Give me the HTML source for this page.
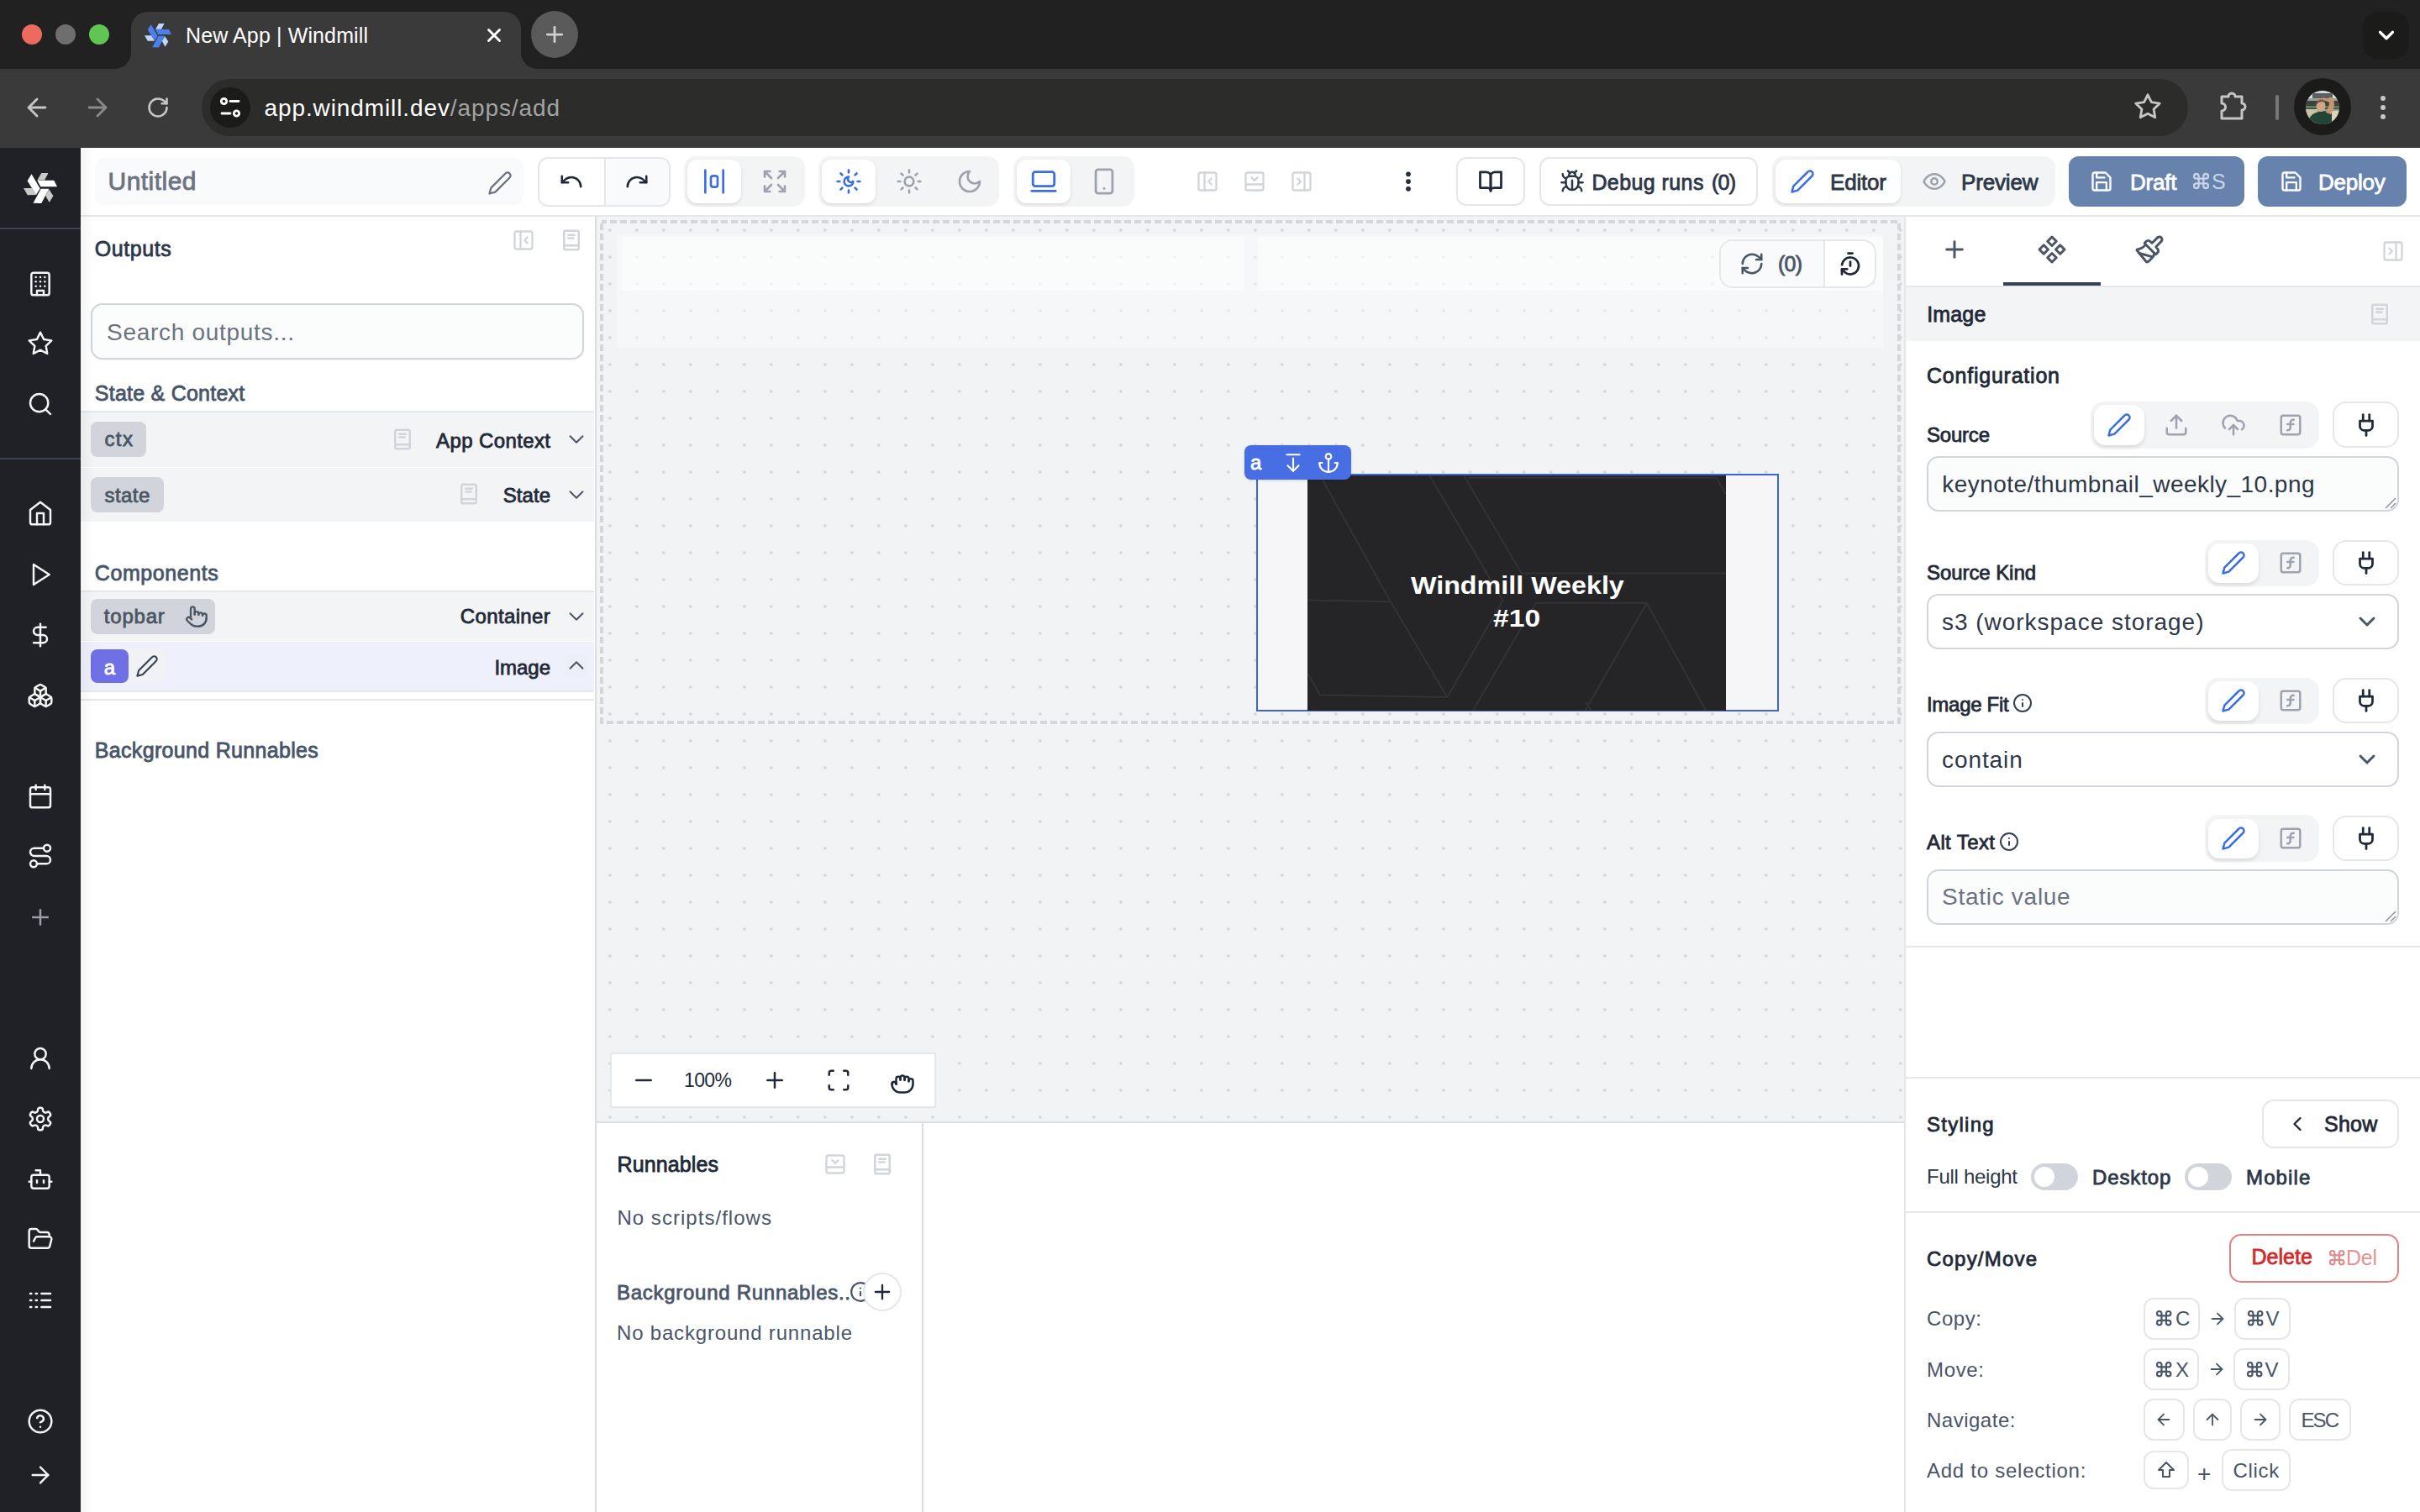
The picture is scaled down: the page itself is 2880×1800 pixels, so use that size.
<!DOCTYPE html><html><head><meta charset="utf-8"><style>
html,body{margin:0;padding:0;width:2880px;height:1800px;overflow:hidden;background:#fff;font-family:"Liberation Sans",sans-serif}
#root{position:relative;width:2880px;height:1800px;overflow:hidden}
.t{position:absolute;line-height:1;white-space:nowrap}
svg{overflow:visible}
</style></head><body><div id="root">
<div style="position:absolute;left:0px;top:0px;width:2880px;height:82px;background:#212121"></div>
<div style="position:absolute;left:0px;top:82px;width:2880px;height:94px;background:#3a3a3a"></div>
<div style="position:absolute;left:156px;top:14px;width:464px;height:68px;background:#3a3a3a;border-radius:20px 20px 0 0"></div>
<div style="position:absolute;left:136px;top:62px;width:20px;height:20px;background:#3a3a3a;overflow:hidden"><div style="position:absolute;left:-20px;top:-20px;width:40px;height:40px;border-radius:50%;background:#212121"></div></div>
<div style="position:absolute;left:620px;top:62px;width:20px;height:20px;background:#3a3a3a;overflow:hidden"><div style="position:absolute;left:0px;top:-20px;width:40px;height:40px;border-radius:50%;background:#212121"></div></div>
<div style="position:absolute;left:26px;top:29px;width:24px;height:24px;background:#ed6a5e;border-radius:50%"></div>
<div style="position:absolute;left:66px;top:29px;width:24px;height:24px;background:#6e6e6e;border-radius:50%"></div>
<div style="position:absolute;left:106px;top:29px;width:24px;height:24px;background:#61c554;border-radius:50%"></div>
<svg style="position:absolute;left:172px;top:27.5px" width="32" height="28.5" viewBox="250 305 1005 905" preserveAspectRatio="none"><polygon points="490,335 745,770 625,960 365,535" fill="#4a7fec"/><polygon points="250,760 502,760 625,960 370,965" fill="#c3d4f6"/><polygon points="785,305 990,305 880,520 660,520" fill="#c3d4f6"/><polygon points="660,525 1160,525 1255,715 760,715" fill="#4a7fec"/><polygon points="770,775 1010,775 785,1210 540,1205" fill="#4a7fec"/><polygon points="1010,790 1140,990 1020,1185 905,975" fill="#c3d4f6"/></svg>
<div id="t1" class="t" style="left:221px;top:30.04px;font-size:25px;font-weight:400;color:#ffffff;letter-spacing:0.124px;font-family:'Liberation Sans',sans-serif;">New App | Windmill</div>
<svg style="position:absolute;left:575.00px;top:29.00px;" width="26" height="26" viewBox="0 0 24 24" fill="none" stroke="#ffffff" stroke-width="2.6" stroke-linecap="round" stroke-linejoin="round"><path d="M18 6 6 18"/><path d="m6 6 12 12"/></svg>
<div style="position:absolute;left:632px;top:13px;width:56px;height:56px;background:#5a5a5a;border-radius:50%"></div>
<svg style="position:absolute;left:645.00px;top:26.00px;" width="30" height="30" viewBox="0 0 24 24" fill="none" stroke="#cfcfcf" stroke-width="2.2" stroke-linecap="round" stroke-linejoin="round"><path d="M5 12h14"/><path d="M12 5v14"/></svg>
<svg style="position:absolute;left:27.00px;top:110.50px;" width="34" height="34" viewBox="0 0 24 24" fill="none" stroke="#c6c6c6" stroke-width="2" stroke-linecap="round" stroke-linejoin="round"><path d="m12 19-7-7 7-7"/><path d="M19 12H5"/></svg>
<svg style="position:absolute;left:99.00px;top:110.50px;" width="34" height="34" viewBox="0 0 24 24" fill="none" stroke="#8a8a8a" stroke-width="2" stroke-linecap="round" stroke-linejoin="round"><path d="M5 12h14"/><path d="m12 5 7 7-7 7"/></svg>
<svg style="position:absolute;left:174.00px;top:114.00px;" width="28" height="28" viewBox="0 0 24 24" fill="none" stroke="#c6c6c6" stroke-width="2.2" stroke-linecap="round" stroke-linejoin="round"><path d="M21 12a9 9 0 1 1-9-9c2.52 0 4.93 1 6.74 2.74L21 8"/><path d="M21 3v5h-5"/></svg>
<div style="position:absolute;left:240px;top:94px;width:2364px;height:68px;background:#2c2c2a;border-radius:34px"></div>
<div style="position:absolute;left:250px;top:104px;width:48px;height:48px;background:#1b1b19;border-radius:50%"></div>
<svg style="position:absolute;left:260px;top:114px" width="28" height="28" viewBox="0 0 28 28" fill="none" stroke="#fff" stroke-width="2.8" stroke-linecap="round"><circle cx="6.5" cy="6.5" r="3.2"/><path d="M14 6.5h10"/><circle cx="21.5" cy="21" r="3.2"/><path d="M4 21h10"/></svg>
<div id="t2" class="t" style="left:314.5px;top:114.80px;font-size:28px;font-weight:400;color:#ffffff;letter-spacing:0.896px;font-family:'Liberation Sans',sans-serif;">app.windmill.dev<span style="color:#a3a3a3">/apps/add</span></div>
<svg style="position:absolute;left:2539.00px;top:110.00px;" width="34" height="34" viewBox="0 0 24 24" fill="none" stroke="#c6c6c6" stroke-width="2" stroke-linecap="round" stroke-linejoin="round"><polygon points="12 2 15.09 8.26 22 9.27 17 14.14 18.18 21.02 12 17.77 5.82 21.02 7 14.14 2 9.27 8.91 8.26 12 2"/></svg>
<svg style="position:absolute;left:2640px;top:108px" width="36" height="36" viewBox="0 0 36 36" fill="none" stroke="#c6c6c6" stroke-width="3" stroke-linejoin="round"><path d="M4 7 H12 A4 4 0 0 1 20 7 H28 V15 A4 4 0 0 1 28 23 V33 H4 V24 A4.5 4.5 0 0 0 4 15 Z"/></svg>
<div style="position:absolute;left:2708px;top:113px;width:4px;height:30px;background:#777;border-radius:2px"></div>
<div style="position:absolute;left:2730px;top:93px;width:68px;height:68px;background:#1b1b19;border-radius:50%"></div>
<svg style="position:absolute;left:2744px;top:107.5px" width="40" height="40" viewBox="0 0 40 40"><defs><clipPath id="av"><circle cx="20" cy="20" r="20"/></clipPath></defs><g clip-path="url(#av)"><rect width="40" height="40" fill="#9aa09c"/><rect y="0" width="40" height="9" fill="#d8dcdc"/><rect x="8" y="3" width="24" height="6" fill="#5a6060"/><rect x="0" y="12" width="40" height="10" fill="#3c4440"/><rect x="0" y="18" width="40" height="3" fill="#5d7d55"/><rect x="0" y="22" width="14" height="18" fill="#c9c3a8"/><rect x="26" y="24" width="14" height="16" fill="#ddd3bd"/><path d="M2 40 Q4 27 16 25 Q26 23 31 27 L31 40 Z" fill="#234535"/><path d="M24 26 Q30 16 27 9 Q31 6 33 10 Q36 20 30 28 Z" fill="#c69574"/><path d="M14 10 Q24 6 30 12 L28 14 Q22 10 16 13 Z" fill="#c69574"/><ellipse cx="18" cy="18" rx="5.5" ry="7" fill="#d3a584"/><path d="M12.5 14 Q17 8 23 12 L22 14 Q17 11 13 16 Z" fill="#6d5542"/></g></svg>
<div style="position:absolute;left:2833px;top:114px;width:6px;height:6px;background:#c6c6c6;border-radius:50%"></div>
<div style="position:absolute;left:2833px;top:125px;width:6px;height:6px;background:#c6c6c6;border-radius:50%"></div>
<div style="position:absolute;left:2833px;top:136px;width:6px;height:6px;background:#c6c6c6;border-radius:50%"></div>
<div style="position:absolute;left:2812px;top:14px;width:55px;height:56px;background:#1b1b19;border-radius:18px"></div>
<svg style="position:absolute;left:2825.00px;top:27.00px;" width="30" height="30" viewBox="0 0 24 24" fill="none" stroke="#ffffff" stroke-width="2.6" stroke-linecap="round" stroke-linejoin="round"><path d="m6 9 6 6 6-6"/></svg>
<div style="position:absolute;left:0px;top:176px;width:96px;height:1624px;background:#1f2126"></div>
<div style="position:absolute;left:0px;top:271px;width:96px;height:2px;background:#3a4150"></div>
<div style="position:absolute;left:0px;top:545px;width:96px;height:2px;background:#3a4150"></div>
<svg style="position:absolute;left:28px;top:206px" width="40" height="36" viewBox="250 305 1005 905" preserveAspectRatio="none"><polygon points="490,335 745,770 625,960 365,535" fill="#ffffff"/><polygon points="250,760 502,760 625,960 370,965" fill="#c9c9c9"/><polygon points="785,305 990,305 880,520 660,520" fill="#c9c9c9"/><polygon points="660,525 1160,525 1255,715 760,715" fill="#ffffff"/><polygon points="770,775 1010,775 785,1210 540,1205" fill="#ffffff"/><polygon points="1010,790 1140,990 1020,1185 905,975" fill="#c9c9c9"/></svg>
<svg style="position:absolute;left:32.00px;top:322.00px;" width="32" height="32" viewBox="0 0 24 24" fill="none" stroke="#f5f5f6" stroke-width="1.85" stroke-linecap="round" stroke-linejoin="round"><rect width="16" height="20" x="4" y="2" rx="2" ry="2"/><path d="M9 22v-4h6v4"/><path d="M8 6h.01"/><path d="M16 6h.01"/><path d="M12 6h.01"/><path d="M12 10h.01"/><path d="M12 14h.01"/><path d="M16 10h.01"/><path d="M16 14h.01"/><path d="M8 10h.01"/><path d="M8 14h.01"/></svg>
<svg style="position:absolute;left:32.00px;top:393.40px;" width="32" height="32" viewBox="0 0 24 24" fill="none" stroke="#f5f5f6" stroke-width="1.85" stroke-linecap="round" stroke-linejoin="round"><polygon points="12 2 15.09 8.26 22 9.27 17 14.14 18.18 21.02 12 17.77 5.82 21.02 7 14.14 2 9.27 8.91 8.26 12 2"/></svg>
<svg style="position:absolute;left:32.00px;top:465.20px;" width="32" height="32" viewBox="0 0 24 24" fill="none" stroke="#f5f5f6" stroke-width="1.85" stroke-linecap="round" stroke-linejoin="round"><circle cx="11" cy="11" r="8"/><path d="m21 21-4.3-4.3"/></svg>
<svg style="position:absolute;left:32.00px;top:595.00px;" width="32" height="32" viewBox="0 0 24 24" fill="none" stroke="#f5f5f6" stroke-width="1.85" stroke-linecap="round" stroke-linejoin="round"><path d="m3 9 9-7 9 7v11a2 2 0 0 1-2 2H5a2 2 0 0 1-2-2z"/><polyline points="9 22 9 12 15 12 15 22"/></svg>
<svg style="position:absolute;left:32.00px;top:667.80px;" width="32" height="32" viewBox="0 0 24 24" fill="none" stroke="#f5f5f6" stroke-width="1.85" stroke-linecap="round" stroke-linejoin="round"><polygon points="6 3 20 12 6 21 6 3"/></svg>
<svg style="position:absolute;left:32.00px;top:740.30px;" width="32" height="32" viewBox="0 0 24 24" fill="none" stroke="#f5f5f6" stroke-width="1.85" stroke-linecap="round" stroke-linejoin="round"><line x1="12" x2="12" y1="2" y2="22"/><path d="M17 5H9.5a3.5 3.5 0 0 0 0 7h5a3.5 3.5 0 0 1 0 7H6"/></svg>
<svg style="position:absolute;left:32.00px;top:812.40px;" width="32" height="32" viewBox="0 0 24 24" fill="none" stroke="#f5f5f6" stroke-width="1.85" stroke-linecap="round" stroke-linejoin="round"><path d="M2.97 12.92A2 2 0 0 0 2 14.63v3.24a2 2 0 0 0 .97 1.71l3 1.8a2 2 0 0 0 2.06 0L12 19v-5.5l-5-3-4.03 2.42Z"/><path d="m7 16.5-4.74-2.85"/><path d="m7 16.5 5-3"/><path d="M7 16.5v5.17"/><path d="M12 13.5V19l3.97 2.38a2 2 0 0 0 2.06 0l3-1.8a2 2 0 0 0 .97-1.71v-3.24a2 2 0 0 0-.97-1.71L17 10.5l-5 3Z"/><path d="m17 16.5-5-3"/><path d="m17 16.5 4.74-2.85"/><path d="M17 16.5v5.17"/><path d="M7.97 4.42A2 2 0 0 0 7 6.13v4.37l5 3 5-3V6.13a2 2 0 0 0-.97-1.71l-3-1.8a2 2 0 0 0-2.06 0l-3 1.8Z"/><path d="M12 8 7.26 5.15"/><path d="m12 8 4.74-2.85"/><path d="M12 13.5V8"/></svg>
<svg style="position:absolute;left:32.00px;top:932.00px;" width="32" height="32" viewBox="0 0 24 24" fill="none" stroke="#f5f5f6" stroke-width="1.85" stroke-linecap="round" stroke-linejoin="round"><rect width="18" height="18" x="3" y="4" rx="2" ry="2"/><line x1="16" x2="16" y1="2" y2="6"/><line x1="8" x2="8" y1="2" y2="6"/><line x1="3" x2="21" y1="10" y2="10"/></svg>
<svg style="position:absolute;left:32.00px;top:1003.40px;" width="32" height="32" viewBox="0 0 24 24" fill="none" stroke="#f5f5f6" stroke-width="1.85" stroke-linecap="round" stroke-linejoin="round"><circle cx="6" cy="19" r="3"/><path d="M9 19h8.5a3.5 3.5 0 0 0 0-7h-11a3.5 3.5 0 0 1 0-7H15"/><circle cx="18" cy="5" r="3"/></svg>
<svg style="position:absolute;left:32.00px;top:1243.50px;" width="32" height="32" viewBox="0 0 24 24" fill="none" stroke="#f5f5f6" stroke-width="1.85" stroke-linecap="round" stroke-linejoin="round"><circle cx="12" cy="8" r="5"/><path d="M20 21a8 8 0 0 0-16 0"/></svg>
<svg style="position:absolute;left:32.00px;top:1316.00px;" width="32" height="32" viewBox="0 0 24 24" fill="none" stroke="#f5f5f6" stroke-width="1.85" stroke-linecap="round" stroke-linejoin="round"><path d="M12.22 2h-.44a2 2 0 0 0-2 2v.18a2 2 0 0 1-1 1.73l-.43.25a2 2 0 0 1-2 0l-.15-.08a2 2 0 0 0-2.73.73l-.22.38a2 2 0 0 0 .73 2.73l.15.1a2 2 0 0 1 1 1.72v.51a2 2 0 0 1-1 1.74l-.15.09a2 2 0 0 0-.73 2.73l.22.38a2 2 0 0 0 2.73.73l.15-.08a2 2 0 0 1 2 0l.43.25a2 2 0 0 1 1 1.73V20a2 2 0 0 0 2 2h.44a2 2 0 0 0 2-2v-.18a2 2 0 0 1 1-1.73l.43-.25a2 2 0 0 1 2 0l.15.08a2 2 0 0 0 2.73-.73l.22-.39a2 2 0 0 0-.73-2.73l-.15-.08a2 2 0 0 1-1-1.74v-.5a2 2 0 0 1 1-1.74l.15-.09a2 2 0 0 0 .73-2.73l-.22-.38a2 2 0 0 0-2.73-.73l-.15.08a2 2 0 0 1-2 0l-.43-.25a2 2 0 0 1-1-1.73V4a2 2 0 0 0-2-2z"/><circle cx="12" cy="12" r="3"/></svg>
<svg style="position:absolute;left:32.00px;top:1388.00px;" width="32" height="32" viewBox="0 0 24 24" fill="none" stroke="#f5f5f6" stroke-width="1.85" stroke-linecap="round" stroke-linejoin="round"><path d="M12 8V4H8"/><rect width="16" height="12" x="4" y="8" rx="2"/><path d="M2 14h2"/><path d="M20 14h2"/><path d="M15 13v2"/><path d="M9 13v2"/></svg>
<svg style="position:absolute;left:32.00px;top:1459.00px;" width="32" height="32" viewBox="0 0 24 24" fill="none" stroke="#f5f5f6" stroke-width="1.85" stroke-linecap="round" stroke-linejoin="round"><path d="m6 14 1.5-2.9A2 2 0 0 1 9.24 10H20a2 2 0 0 1 1.94 2.5l-1.54 6a2 2 0 0 1-1.95 1.5H4a2 2 0 0 1-2-2V5a2 2 0 0 1 2-2h3.9a2 2 0 0 1 1.69.9l.81 1.2a2 2 0 0 0 1.67.9H18a2 2 0 0 1 2 2v2"/></svg>
<svg style="position:absolute;left:32.00px;top:1531.80px;" width="32" height="32" viewBox="0 0 24 24" fill="none" stroke="#f5f5f6" stroke-width="1.85" stroke-linecap="round" stroke-linejoin="round"><path d="M13 12h8"/><path d="M13 18h8"/><path d="M13 6h8"/><path d="M3 12h1"/><path d="M3 18h1"/><path d="M3 6h1"/><path d="M8 12h1"/><path d="M8 18h1"/><path d="M8 6h1"/></svg>
<svg style="position:absolute;left:32.00px;top:1675.60px;" width="32" height="32" viewBox="0 0 24 24" fill="none" stroke="#f5f5f6" stroke-width="1.85" stroke-linecap="round" stroke-linejoin="round"><circle cx="12" cy="12" r="10"/><path d="M9.09 9a3 3 0 0 1 5.83 1c0 2-3 3-3 3"/><path d="M12 17h.01"/></svg>
<svg style="position:absolute;left:32.00px;top:1739.70px;" width="32" height="32" viewBox="0 0 24 24" fill="none" stroke="#f5f5f6" stroke-width="1.85" stroke-linecap="round" stroke-linejoin="round"><path d="M5 12h14"/><path d="m12 5 7 7-7 7"/></svg>
<svg style="position:absolute;left:33.00px;top:1076.80px;" width="30" height="30" viewBox="0 0 24 24" fill="none" stroke="#9aa0aa" stroke-width="2" stroke-linecap="round" stroke-linejoin="round"><path d="M5 12h14"/><path d="M12 5v14"/></svg>
<div style="position:absolute;left:96px;top:176px;width:2784px;height:82px;background:#fff;border-bottom:2px solid #e5e7eb;box-sizing:border-box"></div>
<div style="position:absolute;left:112.5px;top:188px;width:510.5px;height:56px;background:#f9fafb;border-radius:12px"></div>
<div id="t3" class="t" style="left:128.5px;top:201.20px;font-size:30px;font-weight:400;-webkit-text-stroke:0.8px #6b7280;color:#6b7280;letter-spacing:0.467px;font-family:'Liberation Sans',sans-serif;">Untitled</div>
<svg style="position:absolute;left:580.00px;top:202.50px;" width="30" height="30" viewBox="0 0 24 24" fill="none" stroke="#6b7280" stroke-width="1.8" stroke-linecap="round" stroke-linejoin="round"><path d="M17 3a2.85 2.83 0 1 1 4 4L7.5 20.5 2 22l1.5-5.5Z"/></svg>
<div style="position:absolute;left:640px;top:187px;width:157.5px;height:59px;background:#fff;border:2px solid #e5e7eb;border-radius:12px;box-sizing:border-box;overflow:hidden"></div>
<div style="position:absolute;left:719px;top:189px;width:76.5px;height:55px;background:#f9fafb;border-radius:0 10px 10px 0;border-left:2px solid #e5e7eb;box-sizing:border-box"></div>
<svg style="position:absolute;left:665.00px;top:201.00px;" width="30" height="30" viewBox="0 0 24 24" fill="none" stroke="#1f2937" stroke-width="2" stroke-linecap="round" stroke-linejoin="round"><path d="M3 7v6h6"/><path d="M21 17a9 9 0 0 0-9-9 9 9 0 0 0-6 2.3L3 13"/></svg>
<svg style="position:absolute;left:743.00px;top:201.00px;" width="30" height="30" viewBox="0 0 24 24" fill="none" stroke="#1f2937" stroke-width="2" stroke-linecap="round" stroke-linejoin="round"><path d="M21 7v6h-6"/><path d="M3 17a9 9 0 0 1 9-9 9 9 0 0 1 6 2.3l3 2.7"/></svg>
<div style="position:absolute;left:814px;top:186px;width:143.60000000000002px;height:60px;background:#f3f4f6;border-radius:14px"></div>
<div style="position:absolute;left:818px;top:190px;width:63.60000000000002px;height:51.5px;background:#fff;border-radius:12px;box-shadow:0 2px 4px rgba(0,0,0,0.10)"></div>
<svg style="position:absolute;left:834.00px;top:200.00px;" width="32" height="32" viewBox="0 0 24 24" fill="none" stroke="#3b6fe0" stroke-width="2" stroke-linecap="round" stroke-linejoin="round"><rect width="6" height="10" x="9" y="7" rx="2"/><path d="M4 22V2"/><path d="M20 22V2"/></svg>
<svg style="position:absolute;left:906.00px;top:200.00px;" width="32" height="32" viewBox="0 0 24 24" fill="none" stroke="#9ca3af" stroke-width="2" stroke-linecap="round" stroke-linejoin="round"><path d="m21 21-6-6m6 6v-4.8m0 4.8h-4.8"/><path d="M3 16.2V21m0 0h4.8M3 21l6-6"/><path d="M21 7.8V3m0 0h-4.8M21 3l-6 6"/><path d="M3 7.8V3m0 0h4.8M3 3l6 6"/></svg>
<div style="position:absolute;left:974px;top:186px;width:215px;height:60px;background:#f3f4f6;border-radius:14px"></div>
<div style="position:absolute;left:978px;top:190px;width:64px;height:51.5px;background:#fff;border-radius:12px;box-shadow:0 2px 4px rgba(0,0,0,0.10)"></div>
<svg style="position:absolute;left:994.00px;top:200.00px;" width="32" height="32" viewBox="0 0 24 24" fill="none" stroke="#3b6fe0" stroke-width="2" stroke-linecap="round" stroke-linejoin="round"><path d="M12 8a2.83 2.83 0 0 0 4 4 4 4 0 1 1-4-4"/><path d="M12 2v2"/><path d="M12 20v2"/><path d="m4.9 4.9 1.4 1.4"/><path d="m17.7 17.7 1.4 1.4"/><path d="M2 12h2"/><path d="M20 12h2"/><path d="m6.3 17.7-1.4 1.4"/><path d="m19.1 4.9-1.4 1.4"/></svg>
<svg style="position:absolute;left:1066.00px;top:200.00px;" width="32" height="32" viewBox="0 0 24 24" fill="none" stroke="#9ca3af" stroke-width="2" stroke-linecap="round" stroke-linejoin="round"><circle cx="12" cy="12" r="4"/><path d="M12 2v2"/><path d="M12 20v2"/><path d="m4.93 4.93 1.41 1.41"/><path d="m17.66 17.66 1.41 1.41"/><path d="M2 12h2"/><path d="M20 12h2"/><path d="m6.34 17.66-1.41 1.41"/><path d="m19.07 4.93-1.41 1.41"/></svg>
<svg style="position:absolute;left:1138.00px;top:200.00px;" width="32" height="32" viewBox="0 0 24 24" fill="none" stroke="#9ca3af" stroke-width="2" stroke-linecap="round" stroke-linejoin="round"><path d="M12 3a6 6 0 0 0 9 9 9 9 0 1 1-9-9Z"/></svg>
<div style="position:absolute;left:1206px;top:186px;width:143.5999999999999px;height:60px;background:#f3f4f6;border-radius:14px"></div>
<div style="position:absolute;left:1210px;top:190px;width:64px;height:51.5px;background:#fff;border-radius:12px;box-shadow:0 2px 4px rgba(0,0,0,0.10)"></div>
<svg style="position:absolute;left:1225.00px;top:199.00px;" width="34" height="34" viewBox="0 0 24 24" fill="none" stroke="#3b6fe0" stroke-width="2" stroke-linecap="round" stroke-linejoin="round"><rect width="18" height="12" x="3" y="4" rx="2" ry="2"/><line x1="2" x2="22" y1="20" y2="20"/></svg>
<svg style="position:absolute;left:1297.00px;top:199.00px;" width="34" height="34" viewBox="0 0 24 24" fill="none" stroke="#9ca3af" stroke-width="2" stroke-linecap="round" stroke-linejoin="round"><rect width="14" height="20" x="5" y="2" rx="2" ry="2"/><path d="M12 18h.01"/></svg>
<svg style="position:absolute;left:1423.00px;top:202.00px;" width="28" height="28" viewBox="0 0 24 24" fill="none" stroke="#d1d5db" stroke-width="2" stroke-linecap="round" stroke-linejoin="round"><rect width="18" height="18" x="3" y="3" rx="2"/><path d="M9 3v18"/><path d="m16 15-3-3 3-3"/></svg>
<svg style="position:absolute;left:1479.00px;top:202.00px;" width="28" height="28" viewBox="0 0 24 24" fill="none" stroke="#d1d5db" stroke-width="2" stroke-linecap="round" stroke-linejoin="round"><rect width="18" height="18" x="3" y="3" rx="2"/><path d="M3 15h18"/><path d="m9 8 3 3 3-3"/></svg>
<svg style="position:absolute;left:1535.00px;top:202.00px;" width="28" height="28" viewBox="0 0 24 24" fill="none" stroke="#d1d5db" stroke-width="2" stroke-linecap="round" stroke-linejoin="round"><rect width="18" height="18" x="3" y="3" rx="2"/><path d="M15 3v18"/><path d="m8 9 3 3-3 3"/></svg>
<svg style="position:absolute;left:1661.00px;top:201.00px;" width="30" height="30" viewBox="0 0 24 24" fill="none" stroke="#1f2937" stroke-width="2.6" stroke-linecap="round" stroke-linejoin="round"><circle cx="12" cy="12" r="1"/><circle cx="12" cy="5" r="1"/><circle cx="12" cy="19" r="1"/></svg>
<div style="position:absolute;left:1732.6px;top:186.8px;width:82.80000000000018px;height:58.0px;border:2px solid #e5e7eb;border-radius:12px;box-sizing:border-box"></div>
<svg style="position:absolute;left:1758.50px;top:201.00px;" width="30" height="30" viewBox="0 0 24 24" fill="none" stroke="#1f2937" stroke-width="2.2" stroke-linecap="round" stroke-linejoin="round"><path d="M2 3h6a4 4 0 0 1 4 4v14a3 3 0 0 0-3-3H2z"/><path d="M22 3h-6a4 4 0 0 0-4 4v14a3 3 0 0 1 3-3h7z"/></svg>
<div style="position:absolute;left:1832.4px;top:186.8px;width:259.4000000000001px;height:58.0px;border:2px solid #e5e7eb;border-radius:12px;box-sizing:border-box"></div>
<svg style="position:absolute;left:1856.00px;top:201.00px;" width="30" height="30" viewBox="0 0 24 24" fill="none" stroke="#2d3748" stroke-width="2" stroke-linecap="round" stroke-linejoin="round"><path d="m8 2 1.88 1.88"/><path d="M14.12 3.88 16 2"/><path d="M9 7.13v-1a3.003 3.003 0 1 1 6 0v1"/><path d="M12 20c-3.3 0-6-2.7-6-6v-3a4 4 0 0 1 4-4h4a4 4 0 0 1 4 4v3c0 3.3-2.7 6-6 6"/><path d="M12 20v-9"/><path d="M6.53 9C4.6 8.8 3 7.1 3 5"/><path d="M6 13H2"/><path d="M3 21c0-2.1 1.7-3.9 3.8-4"/><path d="M20.97 5c0 2.1-1.6 3.8-3.5 4"/><path d="M22 13h-4"/><path d="M17.2 17c2.1.1 3.8 1.9 3.8 4"/></svg>
<div id="t4" class="t" style="left:1894.4px;top:204.74px;font-size:25px;font-weight:400;-webkit-text-stroke:0.8px #2d3748;color:#2d3748;letter-spacing:0.416px;font-family:'Liberation Sans',sans-serif;">Debug runs</div>
<div id="t5" class="t" style="left:2037px;top:204.74px;font-size:25px;font-weight:400;-webkit-text-stroke:0.8px #2d3748;color:#2d3748;letter-spacing:-0.781px;font-family:'Liberation Sans',sans-serif;">(0)</div>
<div style="position:absolute;left:2109px;top:186.3px;width:336.8000000000002px;height:59.29999999999998px;background:#f3f4f6;border-radius:14px"></div>
<div style="position:absolute;left:2113px;top:190px;width:148.80000000000018px;height:51.80000000000001px;background:#fff;border-radius:12px;box-shadow:0 2px 4px rgba(0,0,0,0.10)"></div>
<svg style="position:absolute;left:2130.00px;top:201.00px;" width="30" height="30" viewBox="0 0 24 24" fill="none" stroke="#3b6fe0" stroke-width="2" stroke-linecap="round" stroke-linejoin="round"><path d="M17 3a2.85 2.83 0 1 1 4 4L7.5 20.5 2 22l1.5-5.5Z"/></svg>
<div id="t6" class="t" style="left:2178px;top:203.89px;font-size:26px;font-weight:400;-webkit-text-stroke:0.8px #2d3748;color:#2d3748;letter-spacing:-0.186px;font-family:'Liberation Sans',sans-serif;">Editor</div>
<svg style="position:absolute;left:2287.00px;top:201.00px;" width="30" height="30" viewBox="0 0 24 24" fill="none" stroke="#9ca3af" stroke-width="2" stroke-linecap="round" stroke-linejoin="round"><path d="M2 12s3-7 10-7 10 7 10 7-3 7-10 7-10-7-10-7Z"/><circle cx="12" cy="12" r="3"/></svg>
<div id="t7" class="t" style="left:2334px;top:203.89px;font-size:26px;font-weight:400;-webkit-text-stroke:0.8px #2d3748;color:#2d3748;letter-spacing:-0.163px;font-family:'Liberation Sans',sans-serif;">Preview</div>
<div style="position:absolute;left:2462px;top:186.3px;width:208.5px;height:59.29999999999998px;background:#6682ad;border-radius:12px"></div>
<svg style="position:absolute;left:2487.00px;top:202.00px;" width="28" height="28" viewBox="0 0 24 24" fill="none" stroke="#ffffff" stroke-width="2" stroke-linecap="round" stroke-linejoin="round"><path d="M19 21H5a2 2 0 0 1-2-2V5a2 2 0 0 1 2-2h11l5 5v11a2 2 0 0 1-2 2z"/><polyline points="17 21 17 13 7 13 7 21"/><polyline points="7 3 7 8 15 8"/></svg>
<div id="t8" class="t" style="left:2535px;top:203.89px;font-size:26px;font-weight:400;-webkit-text-stroke:0.8px #ffffff;color:#ffffff;letter-spacing:-0.214px;font-family:'Liberation Sans',sans-serif;">Draft</div>
<svg style="position:absolute;left:2611.00px;top:207.00px" width="17" height="17" viewBox="3 3 18 18" fill="none" stroke="#c9d3e4" stroke-width="2.4" stroke-linecap="round" stroke-linejoin="round"><path d="M15 6v12a3 3 0 1 0 3-3H6a3 3 0 1 0 3 3V6a3 3 0 1 0-3 3h12a3 3 0 1 0-3-3"/></svg>
<div id="t9" class="t" style="left:2632px;top:204.24px;font-size:25px;font-weight:400;color:#c9d3e4;letter-spacing:0.000px;font-family:'Liberation Sans',sans-serif;">S</div>
<div style="position:absolute;left:2687px;top:186.3px;width:177px;height:59.29999999999998px;background:#6682ad;border-radius:12px"></div>
<svg style="position:absolute;left:2713.00px;top:202.00px;" width="28" height="28" viewBox="0 0 24 24" fill="none" stroke="#ffffff" stroke-width="2" stroke-linecap="round" stroke-linejoin="round"><path d="M19 21H5a2 2 0 0 1-2-2V5a2 2 0 0 1 2-2h11l5 5v11a2 2 0 0 1-2 2z"/><polyline points="17 21 17 13 7 13 7 21"/><polyline points="7 3 7 8 15 8"/></svg>
<div id="t10" class="t" style="left:2759px;top:203.89px;font-size:26px;font-weight:400;-webkit-text-stroke:0.8px #ffffff;color:#ffffff;letter-spacing:-0.247px;font-family:'Liberation Sans',sans-serif;">Deploy</div>
<div style="position:absolute;left:96px;top:258px;width:614px;height:1542px;background:#fff;border-right:2px solid #dcdde0;box-sizing:border-box"></div>
<div id="t11" class="t" style="left:112.8px;top:284.24px;font-size:25px;font-weight:400;-webkit-text-stroke:0.8px #2d3748;color:#2d3748;letter-spacing:0.574px;font-family:'Liberation Sans',sans-serif;">Outputs</div>
<svg style="position:absolute;left:609.00px;top:272.00px;" width="28" height="28" viewBox="0 0 24 24" fill="none" stroke="#d1d5db" stroke-width="2" stroke-linecap="round" stroke-linejoin="round"><rect width="18" height="18" x="3" y="3" rx="2"/><path d="M9 3v18"/><path d="m16 15-3-3 3-3"/></svg>
<svg style="position:absolute;left:665.00px;top:270.50px;" width="30" height="30" viewBox="0 0 24 24" fill="none" stroke="#d1d5db" stroke-width="2" stroke-linecap="round" stroke-linejoin="round"><rect x="5" y="3" width="14" height="18" rx="1.5"/><path d="M5 17h14"/><path d="M9 7h6"/><path d="M9 10h5"/></svg>
<div style="position:absolute;left:108.4px;top:361.4px;width:587.1px;height:66.60000000000002px;background:#fbfcfc;border:2px solid #d1d5db;border-radius:14px;box-sizing:border-box;box-shadow:0 1px 2px rgba(0,0,0,0.05)"></div>
<div id="t12" class="t" style="left:127px;top:381.90px;font-size:28px;font-weight:400;color:#6b7280;letter-spacing:0.707px;font-family:'Liberation Sans',sans-serif;">Search outputs...</div>
<div id="t13" class="t" style="left:112.8px;top:456.44px;font-size:25px;font-weight:400;-webkit-text-stroke:0.8px #475569;color:#475569;letter-spacing:0.236px;font-family:'Liberation Sans',sans-serif;">State &amp; Context</div>
<div style="position:absolute;left:96px;top:489px;width:611px;height:66.5px;background:#f3f4f6;border-top:2px solid #e5e7eb;box-sizing:border-box"></div>
<div style="position:absolute;left:96px;top:557px;width:611px;height:64px;background:#f3f4f6"></div>
<div style="position:absolute;left:108px;top:502px;width:66px;height:41.700000000000045px;background:#d1d5db;border-radius:8px"></div>
<div id="t14" class="t" style="left:124.4px;top:511.38px;font-size:24px;font-weight:400;-webkit-text-stroke:0.8px #4b5563;color:#4b5563;letter-spacing:1.415px;font-family:'Liberation Sans',sans-serif;">ctx</div>
<svg style="position:absolute;left:464.00px;top:508.00px;" width="30" height="30" viewBox="0 0 24 24" fill="none" stroke="#d1d5db" stroke-width="2" stroke-linecap="round" stroke-linejoin="round"><rect x="5" y="3" width="14" height="18" rx="1.5"/><path d="M5 17h14"/><path d="M9 7h6"/><path d="M9 10h5"/></svg>
<div id="t15" class="t" style="left:519px;top:512.68px;font-size:24px;font-weight:400;-webkit-text-stroke:0.8px #1f2937;color:#1f2937;letter-spacing:0.391px;font-family:'Liberation Sans',sans-serif;">App Context</div>
<svg style="position:absolute;left:670.50px;top:507.50px;" width="30" height="30" viewBox="0 0 24 24" fill="none" stroke="#4b5563" stroke-width="1.6" stroke-linecap="round" stroke-linejoin="round"><path d="m6 9 6 6 6-6"/></svg>
<div style="position:absolute;left:108px;top:568px;width:86.80000000000001px;height:41.799999999999955px;background:#d1d5db;border-radius:8px"></div>
<div id="t16" class="t" style="left:124.4px;top:577.98px;font-size:24px;font-weight:400;-webkit-text-stroke:0.8px #4b5563;color:#4b5563;letter-spacing:0.489px;font-family:'Liberation Sans',sans-serif;">state</div>
<svg style="position:absolute;left:543.00px;top:573.00px;" width="30" height="30" viewBox="0 0 24 24" fill="none" stroke="#d1d5db" stroke-width="2" stroke-linecap="round" stroke-linejoin="round"><rect x="5" y="3" width="14" height="18" rx="1.5"/><path d="M5 17h14"/><path d="M9 7h6"/><path d="M9 10h5"/></svg>
<div id="t17" class="t" style="left:598.8px;top:577.98px;font-size:24px;font-weight:400;-webkit-text-stroke:0.8px #1f2937;color:#1f2937;letter-spacing:0.038px;font-family:'Liberation Sans',sans-serif;">State</div>
<svg style="position:absolute;left:670.50px;top:574.00px;" width="30" height="30" viewBox="0 0 24 24" fill="none" stroke="#4b5563" stroke-width="1.6" stroke-linecap="round" stroke-linejoin="round"><path d="m6 9 6 6 6-6"/></svg>
<div id="t18" class="t" style="left:112.8px;top:670.04px;font-size:25px;font-weight:400;-webkit-text-stroke:0.8px #475569;color:#475569;letter-spacing:0.583px;font-family:'Liberation Sans',sans-serif;">Components</div>
<div style="position:absolute;left:96px;top:703px;width:611px;height:59.60000000000002px;background:#f3f4f6;border-top:2px solid #e5e7eb;box-sizing:border-box"></div>
<div style="position:absolute;left:108px;top:713.3px;width:148px;height:41.30000000000007px;background:#d1d5db;border-radius:8px"></div>
<div id="t19" class="t" style="left:123.8px;top:722.28px;font-size:24px;font-weight:400;-webkit-text-stroke:0.8px #4b5563;color:#4b5563;letter-spacing:0.787px;font-family:'Liberation Sans',sans-serif;">topbar</div>
<svg style="position:absolute;left:220.00px;top:720.00px;" width="28" height="28" viewBox="0 0 24 24" fill="none" stroke="#4b5563" stroke-width="2" stroke-linecap="round" stroke-linejoin="round"><path d="M22 14a8 8 0 0 1-8 8"/><path d="M18 11v-1a2 2 0 0 0-2-2a2 2 0 0 0-2 2"/><path d="M14 10V9a2 2 0 0 0-2-2a2 2 0 0 0-2 2v1"/><path d="M10 9.5V4a2 2 0 0 0-2-2a2 2 0 0 0-2 2v10"/><path d="M18 11a2 2 0 1 1 4 0v3a8 8 0 0 1-8 8h-2c-2.8 0-4.5-.86-5.99-2.34l-3.6-3.6a2 2 0 0 1 2.83-2.82L7 15"/></svg>
<div id="t20" class="t" style="left:547.8px;top:722.28px;font-size:24px;font-weight:400;-webkit-text-stroke:0.8px #1f2937;color:#1f2937;letter-spacing:0.366px;font-family:'Liberation Sans',sans-serif;">Container</div>
<svg style="position:absolute;left:670.50px;top:718.50px;" width="30" height="30" viewBox="0 0 24 24" fill="none" stroke="#4b5563" stroke-width="1.6" stroke-linecap="round" stroke-linejoin="round"><path d="m6 9 6 6 6-6"/></svg>
<div style="position:absolute;left:96px;top:764.4px;width:611px;height:59.60000000000002px;background:#eef0fb;border-bottom:2px solid #e5e7eb;box-sizing:border-box"></div>
<div style="position:absolute;left:152.7px;top:773.2px;width:43.900000000000006px;height:40.19999999999993px;background:#f1f2f6;border-radius:0 8px 8px 0"></div>
<div style="position:absolute;left:108px;top:773.2px;width:44.69999999999999px;height:40.19999999999993px;background:#6f6fe6;border-radius:8px"></div>
<div id="t21" class="t" style="left:123.8px;top:782.88px;font-size:24px;font-weight:400;-webkit-text-stroke:0.8px #ffffff;color:#ffffff;letter-spacing:0.000px;font-family:'Liberation Sans',sans-serif;">a</div>
<svg style="position:absolute;left:161.00px;top:779.00px;" width="28" height="28" viewBox="0 0 24 24" fill="none" stroke="#374151" stroke-width="1.8" stroke-linecap="round" stroke-linejoin="round"><path d="M17 3a2.85 2.83 0 1 1 4 4L7.5 20.5 2 22l1.5-5.5Z"/></svg>
<div id="t22" class="t" style="left:588.5px;top:782.88px;font-size:24px;font-weight:400;-webkit-text-stroke:0.8px #1f2937;color:#1f2937;letter-spacing:-0.055px;font-family:'Liberation Sans',sans-serif;">Image</div>
<div style="position:absolute;left:672px;top:779px;width:27.399999999999977px;height:26.700000000000045px;background:#eceef8;border-radius:6px"></div>
<svg style="position:absolute;left:670.50px;top:777.00px;" width="30" height="30" viewBox="0 0 24 24" fill="none" stroke="#4b5563" stroke-width="1.6" stroke-linecap="round" stroke-linejoin="round"><path d="m18 15-6-6-6 6"/></svg>
<div style="position:absolute;left:96px;top:831.7px;width:611px;height:2.0px;background:#e5e7eb"></div>
<div id="t23" class="t" style="left:112.8px;top:881.24px;font-size:25px;font-weight:400;-webkit-text-stroke:0.8px #475569;color:#475569;letter-spacing:0.321px;font-family:'Liberation Sans',sans-serif;">Background Runnables</div>
<div style="position:absolute;left:96px;top:176px;width:16px;height:1624px;background:linear-gradient(to right,rgba(0,0,0,0.045),rgba(0,0,0,0))"></div>
<div style="position:absolute;left:710px;top:258px;width:1556px;height:1079px;background-color:#f2f3f5;background-image:radial-gradient(circle at 15.9px 16px,#d6d7db 1.3px,rgba(0,0,0,0) 2.3px);background-size:32px 32px;border-bottom:2px solid #dcdee2;box-sizing:border-box"></div>
<svg style="position:absolute;left:709px;top:257px" width="1557" height="620"><rect x="7" y="7" width="1544" height="596" fill="none" stroke="#d4d6db" stroke-width="4" stroke-dasharray="8 4" stroke-dashoffset="2"/></svg>
<div style="position:absolute;left:734px;top:278.5px;width:1507px;height:135.5px;background:rgba(255,255,255,0.35)"></div>
<div style="position:absolute;left:741px;top:282px;width:739px;height:64px;background:rgba(255,255,255,0.45)"></div>
<div style="position:absolute;left:1496.6px;top:282px;width:744.4000000000001px;height:64px;background:rgba(255,255,255,0.45)"></div>
<div style="position:absolute;left:2046px;top:284.8px;width:187.30000000000018px;height:57.89999999999998px;background:#fff;border:2px solid #e5e7eb;border-radius:16px;box-sizing:border-box;overflow:hidden"></div>
<div style="position:absolute;left:2048px;top:286.8px;width:123.59999999999991px;height:53.89999999999998px;background:#f8fafc;border-radius:14px 0 0 14px;border-right:2px solid #e5e7eb;box-sizing:border-box"></div>
<svg style="position:absolute;left:2070.00px;top:299.00px;" width="30" height="30" viewBox="0 0 24 24" fill="none" stroke="#4b5563" stroke-width="2" stroke-linecap="round" stroke-linejoin="round"><path d="M3 12a9 9 0 0 1 9-9 9.75 9.75 0 0 1 6.74 2.74L21 8"/><path d="M21 3v5h-5"/><path d="M21 12a9 9 0 0 1-9 9 9.75 9.75 0 0 1-6.74-2.74L3 16"/><path d="M8 16H3v5"/></svg>
<div id="t24" class="t" style="left:2116px;top:302.24px;font-size:25px;font-weight:400;-webkit-text-stroke:0.8px #4b5563;color:#4b5563;letter-spacing:-0.781px;font-family:'Liberation Sans',sans-serif;">(0)</div>
<svg style="position:absolute;left:2187.00px;top:299.00px;" width="30" height="30" viewBox="0 0 24 24" fill="none" stroke="#1f2937" stroke-width="2.2" stroke-linecap="round" stroke-linejoin="round"><path d="M10 2h4"/><path d="M12 14v-4"/><path d="M4 13a8 8 0 0 1 8-7 8 8 0 1 1-5.3 14L4 17.6"/><path d="M9 17H4v5"/></svg>
<div style="position:absolute;left:1494.6px;top:564.2px;width:622.0px;height:283.0px;background:#f6f6f8;border:2px solid #3d63dd;box-sizing:border-box"></div>
<svg style="position:absolute;left:1556.4px;top:566px;overflow:hidden" width="498" height="280" viewBox="0 0 498 280"><rect width="498" height="280" fill="#252527"/><g stroke="#333335" stroke-width="2" fill="none"><path d="M17.4 4.2 L98.9 150.3 L166.3 264.1"/><path d="M0.6 148.4 L98.9 150.3"/><path d="M166.3 264.1 L14.6 261.3 L0.6 236"/><path d="M145.3 0 L232.4 148.9 L166.3 264.1"/><path d="M186 0 L254.8 116.6 L497.9 116.6"/><path d="M191.6 2.8 L486.6 2.8 L497.9 22.5"/><path d="M271.7 151.7 L403.8 151.7"/><path d="M271.7 151.7 L197.2 279.6"/><path d="M403.8 151.7 L474 279.6"/><path d="M403.8 151.7 L330.7 279.6"/><path d="M330.7 269.7 L337.7 279.6"/></g></svg>
<div id="t25" class="t" style="left:1678.6px;top:682.95px;font-size:29px;font-weight:700;color:#ffffff;letter-spacing:0.000px;font-family:'Liberation Sans',sans-serif;transform:scaleX(1.113);transform-origin:0 0">Windmill Weekly</div>
<div id="t26" class="t" style="left:1776.7px;top:721.75px;font-size:29px;font-weight:700;color:#ffffff;letter-spacing:0.000px;font-family:'Liberation Sans',sans-serif;transform:scaleX(1.16);transform-origin:0 0">#10</div>
<div style="position:absolute;left:1480.5px;top:530.2px;width:127.5px;height:41.09999999999991px;background:#476ee2;border-radius:8px;box-shadow:0 1px 3px rgba(0,0,0,0.15)"></div>
<div id="t27" class="t" style="left:1488px;top:539.38px;font-size:24px;font-weight:400;-webkit-text-stroke:0.8px #ffffff;color:#ffffff;letter-spacing:0.000px;font-family:'Liberation Sans',sans-serif;">a</div>
<svg style="position:absolute;left:1526.00px;top:538.00px;" width="26" height="26" viewBox="0 0 24 24" fill="none" stroke="#ffffff" stroke-width="2" stroke-linecap="round" stroke-linejoin="round"><path d="M19 3H5"/><path d="M12 21V7"/><path d="m6 15 6 6 6-6"/></svg>
<svg style="position:absolute;left:1568.00px;top:538.00px;" width="26" height="26" viewBox="0 0 24 24" fill="none" stroke="#ffffff" stroke-width="2" stroke-linecap="round" stroke-linejoin="round"><path d="M12 22V8"/><path d="M5 12H2a10 10 0 0 0 20 0h-3"/><circle cx="12" cy="5" r="3"/></svg>
<div style="position:absolute;left:726.4px;top:1252.7px;width:387.19999999999993px;height:66.29999999999995px;background:#fff;border:2px solid #e5e7eb;box-sizing:border-box"></div>
<svg style="position:absolute;left:750.80px;top:1271.00px;" width="30" height="30" viewBox="0 0 24 24" fill="none" stroke="#1f2937" stroke-width="2" stroke-linecap="round" stroke-linejoin="round"><path d="M5 12h14"/></svg>
<div id="t28" class="t" style="left:814px;top:1275.13px;font-size:23px;font-weight:400;color:#1f2937;letter-spacing:-0.609px;font-family:'Liberation Sans',sans-serif;">100%</div>
<svg style="position:absolute;left:906.80px;top:1271.00px;" width="30" height="30" viewBox="0 0 24 24" fill="none" stroke="#1f2937" stroke-width="2" stroke-linecap="round" stroke-linejoin="round"><path d="M5 12h14"/><path d="M12 5v14"/></svg>
<svg style="position:absolute;left:982.80px;top:1271.00px;" width="30" height="30" viewBox="0 0 24 24" fill="none" stroke="#1f2937" stroke-width="2" stroke-linecap="round" stroke-linejoin="round"><path d="M3 7V5a2 2 0 0 1 2-2h2"/><path d="M17 3h2a2 2 0 0 1 2 2v2"/><path d="M21 17v2a2 2 0 0 1-2 2h-2"/><path d="M7 21H5a2 2 0 0 1-2-2v-2"/></svg>
<svg style="position:absolute;left:1059.00px;top:1273.00px;" width="30" height="30" viewBox="0 0 24 24" fill="none" stroke="#1f2937" stroke-width="2" stroke-linecap="round" stroke-linejoin="round"><path d="M18 11.5V9a2 2 0 0 0-2-2a2 2 0 0 0-2 2v1.4"/><path d="M14 10V8a2 2 0 0 0-2-2a2 2 0 0 0-2 2v2"/><path d="M10 9.9V9a2 2 0 0 0-2-2a2 2 0 0 0-2 2v5"/><path d="M6 14a2 2 0 0 0-2-2a2 2 0 0 0-2 2"/><path d="M18 11a2 2 0 1 1 4 0v3a8 8 0 0 1-8 8h-4a8 8 0 0 1-8-8 2 2 0 1 1 4 0"/></svg>
<div style="position:absolute;left:710px;top:1337px;width:389px;height:463px;background:#fff;border-right:2px solid #dcdee2;box-sizing:border-box"></div>
<div style="position:absolute;left:1099px;top:1337px;width:1167px;height:463px;background:#fff"></div>
<div id="t29" class="t" style="left:734.5px;top:1374.24px;font-size:25px;font-weight:400;-webkit-text-stroke:0.8px #1f2937;color:#1f2937;letter-spacing:0.120px;font-family:'Liberation Sans',sans-serif;">Runnables</div>
<svg style="position:absolute;left:980.00px;top:1372.00px;" width="28" height="28" viewBox="0 0 24 24" fill="none" stroke="#d1d5db" stroke-width="2" stroke-linecap="round" stroke-linejoin="round"><rect width="18" height="18" x="3" y="3" rx="2"/><path d="M3 15h18"/><path d="m9 8 3 3 3-3"/></svg>
<svg style="position:absolute;left:1035.00px;top:1371.00px;" width="30" height="30" viewBox="0 0 24 24" fill="none" stroke="#d1d5db" stroke-width="2" stroke-linecap="round" stroke-linejoin="round"><rect x="5" y="3" width="14" height="18" rx="1.5"/><path d="M5 17h14"/><path d="M9 7h6"/><path d="M9 10h5"/></svg>
<div id="t30" class="t" style="left:734.4px;top:1437.98px;font-size:24px;font-weight:400;color:#4a5568;letter-spacing:1.037px;font-family:'Liberation Sans',sans-serif;">No scripts/flows</div>
<div id="t31" class="t" style="left:734px;top:1526.58px;font-size:24px;font-weight:400;-webkit-text-stroke:0.8px #4a5568;color:#4a5568;letter-spacing:0.721px;font-family:'Liberation Sans',sans-serif;">Background Runnables..</div>
<svg style="position:absolute;left:1011.00px;top:1525.00px;" width="26" height="26" viewBox="0 0 24 24" fill="none" stroke="#4a5568" stroke-width="2" stroke-linecap="round" stroke-linejoin="round"><circle cx="12" cy="12" r="10"/><path d="M12 16v-4"/><path d="M12 8h.01"/></svg>
<div style="position:absolute;left:1027px;top:1514.6px;width:46px;height:46.0px;background:#fff;border:2px solid #e5e7eb;border-radius:50%;box-sizing:border-box"></div>
<svg style="position:absolute;left:1036.00px;top:1523.60px;" width="28" height="28" viewBox="0 0 24 24" fill="none" stroke="#1f2937" stroke-width="2" stroke-linecap="round" stroke-linejoin="round"><path d="M5 12h14"/><path d="M12 5v14"/></svg>
<div id="t32" class="t" style="left:734px;top:1574.68px;font-size:24px;font-weight:400;color:#4a5568;letter-spacing:0.816px;font-family:'Liberation Sans',sans-serif;">No background runnable</div>
<div style="position:absolute;left:2266px;top:258px;width:614px;height:1542px;background:#fff;border-left:2px solid #e5e7eb;box-sizing:border-box"></div>
<svg style="position:absolute;left:2309.80px;top:280.70px;" width="32" height="32" viewBox="0 0 24 24" fill="none" stroke="#4b5563" stroke-width="2.2" stroke-linecap="round" stroke-linejoin="round"><path d="M5 12h14"/><path d="M12 5v14"/></svg>
<svg style="position:absolute;left:2424.00px;top:279.00px;" width="36" height="36" viewBox="0 0 24 24" fill="none" stroke="#4b5563" stroke-width="2" stroke-linecap="round" stroke-linejoin="round"><path d="M5.5 8.5 9 12l-3.5 3.5L2 12l3.5-3.5Z"/><path d="m12 2 3.5 3.5L12 9 8.5 5.5 12 2Z"/><path d="M18.5 8.5 22 12l-3.5 3.5L15 12l3.5-3.5Z"/><path d="m12 15 3.5 3.5L12 22l-3.5-3.5L12 15Z"/></svg>
<svg style="position:absolute;left:2540.00px;top:279.00px;" width="36" height="36" viewBox="0 0 24 24" fill="none" stroke="#4b5563" stroke-width="2" stroke-linecap="round" stroke-linejoin="round"><path d="m14.622 17.897-10.68-2.913"/><path d="M18.376 2.622a1 1 0 1 1 3.002 3.002L17.36 9.643a.5.5 0 0 0 0 .707l.944.944a2.41 2.41 0 0 1 0 3.408l-.944.944a.5.5 0 0 1-.707 0L8.354 7.348a.5.5 0 0 1 0-.707l.944-.944a2.41 2.41 0 0 1 3.408 0l.944.944a.5.5 0 0 0 .707 0z"/><path d="M9 8c-1.804 2.71-3.97 3.46-6.583 3.948a.507.507 0 0 0-.302.819l7.32 8.883a1 1 0 0 0 1.185.204C12.735 20.405 16 16.792 16 15"/></svg>
<div style="position:absolute;left:2384px;top:336px;width:115.59999999999991px;height:4px;background:#334155"></div>
<div style="position:absolute;left:2268px;top:339.8px;width:612px;height:2.0px;background:#e5e7eb"></div>
<svg style="position:absolute;left:2834.00px;top:285.00px;" width="28" height="28" viewBox="0 0 24 24" fill="none" stroke="#d1d5db" stroke-width="2" stroke-linecap="round" stroke-linejoin="round"><rect width="18" height="18" x="3" y="3" rx="2"/><path d="M15 3v18"/><path d="m8 9 3 3-3 3"/></svg>
<div style="position:absolute;left:2268px;top:341.8px;width:612px;height:63.80000000000001px;background:#f3f4f6"></div>
<div id="t33" class="t" style="left:2293.3px;top:362.24px;font-size:25px;font-weight:400;-webkit-text-stroke:0.8px #1f2937;color:#1f2937;letter-spacing:0.126px;font-family:'Liberation Sans',sans-serif;">Image</div>
<svg style="position:absolute;left:2817.00px;top:359.00px;" width="30" height="30" viewBox="0 0 24 24" fill="none" stroke="#d1d5db" stroke-width="2" stroke-linecap="round" stroke-linejoin="round"><rect x="5" y="3" width="14" height="18" rx="1.5"/><path d="M5 17h14"/><path d="M9 7h6"/><path d="M9 10h5"/></svg>
<div id="t34" class="t" style="left:2293px;top:434.54px;font-size:25px;font-weight:400;-webkit-text-stroke:0.8px #1f2937;color:#1f2937;letter-spacing:0.774px;font-family:'Liberation Sans',sans-serif;">Configuration</div>
<div id="t35" class="t" style="left:2293px;top:505.78px;font-size:24px;font-weight:400;-webkit-text-stroke:0.8px #1f2937;color:#1f2937;letter-spacing:-0.209px;font-family:'Liberation Sans',sans-serif;">Source</div>
<div style="position:absolute;left:2488px;top:477.9px;width:271.5999999999999px;height:55.80000000000007px;background:#f3f4f6;border-radius:16px"></div>
<div style="position:absolute;left:2492px;top:482.4px;width:59.69999999999982px;height:47.30000000000007px;background:#fff;border-radius:14px;box-shadow:0 3px 5px rgba(0,0,0,0.10)"></div>
<svg style="position:absolute;left:2506.90px;top:490.80px;" width="30" height="30" viewBox="0 0 24 24" fill="none" stroke="#3b6fe0" stroke-width="2" stroke-linecap="round" stroke-linejoin="round"><path d="M17 3a2.85 2.83 0 1 1 4 4L7.5 20.5 2 22l1.5-5.5Z"/></svg>
<svg style="position:absolute;left:2574.90px;top:490.80px;" width="30" height="30" viewBox="0 0 24 24" fill="none" stroke="#9ca3af" stroke-width="2" stroke-linecap="round" stroke-linejoin="round"><path d="M21 15v4a2 2 0 0 1-2 2H5a2 2 0 0 1-2-2v-4"/><polyline points="17 8 12 3 7 8"/><line x1="12" x2="12" y1="3" y2="15"/></svg>
<svg style="position:absolute;left:2642.90px;top:490.80px;" width="30" height="30" viewBox="0 0 24 24" fill="none" stroke="#9ca3af" stroke-width="2" stroke-linecap="round" stroke-linejoin="round"><path d="M4 14.899A7 7 0 1 1 15.71 8h1.79a4.5 4.5 0 0 1 2.5 8.242"/><path d="M12 12v9"/><path d="m16 16-4-4-4 4"/></svg>
<svg style="position:absolute;left:2710.90px;top:490.80px;" width="30" height="30" viewBox="0 0 24 24" fill="none" stroke="#9ca3af" stroke-width="2" stroke-linecap="round" stroke-linejoin="round"><rect width="18" height="18" x="3" y="3" rx="2" ry="2"/><path d="M9 17c2 0 2.8-1 2.8-2.8V10c0-2 1-3.3 3.2-3"/><path d="M9 11.2h5.7"/></svg>
<div style="position:absolute;left:2776.3px;top:478.4px;width:78.69999999999982px;height:54.80000000000007px;background:#fff;border:2px solid #e5e7eb;border-radius:16px;box-sizing:border-box"></div>
<svg style="position:absolute;left:2800.50px;top:490.80px;" width="30" height="30" viewBox="0 0 24 24" fill="none" stroke="#1f2937" stroke-width="2.2" stroke-linecap="round" stroke-linejoin="round"><path d="M12 22v-5"/><path d="M9 8V2"/><path d="M15 8V2"/><path d="M18 8v5a4 4 0 0 1-4 4h-4a4 4 0 0 1-4-4V8Z"/></svg>
<div style="position:absolute;left:2292.5px;top:542.6px;width:562.8000000000002px;height:66.60000000000002px;background:#fbfcfc;border:2px solid #d1d5db;border-radius:14px;box-sizing:border-box"></div>
<svg style="position:absolute;left:2836px;top:590px" width="16" height="16" viewBox="0 0 16 16" stroke="#8a8f98" stroke-width="1.5"><path d="M3 15 L15 3"/><path d="M9 15 L15 9"/></svg>
<div id="t36" class="t" style="left:2311.2px;top:562.90px;font-size:28px;font-weight:400;color:#2d3748;letter-spacing:0.456px;font-family:'Liberation Sans',sans-serif;">keynote/thumbnail_weekly_10.png</div>
<div id="t37" class="t" style="left:2293px;top:669.68px;font-size:24px;font-weight:400;-webkit-text-stroke:0.8px #1f2937;color:#1f2937;letter-spacing:-0.075px;font-family:'Liberation Sans',sans-serif;">Source Kind</div>
<div style="position:absolute;left:2624.3px;top:642.5px;width:135.29999999999973px;height:55.10000000000002px;background:#f3f4f6;border-radius:16px"></div>
<div style="position:absolute;left:2628.3px;top:647.0px;width:59.69999999999982px;height:46.60000000000002px;background:#fff;border-radius:14px;box-shadow:0 3px 5px rgba(0,0,0,0.10)"></div>
<svg style="position:absolute;left:2643.20px;top:655.05px;" width="30" height="30" viewBox="0 0 24 24" fill="none" stroke="#3b6fe0" stroke-width="2" stroke-linecap="round" stroke-linejoin="round"><path d="M17 3a2.85 2.83 0 1 1 4 4L7.5 20.5 2 22l1.5-5.5Z"/></svg>
<svg style="position:absolute;left:2711.20px;top:655.05px;" width="30" height="30" viewBox="0 0 24 24" fill="none" stroke="#9ca3af" stroke-width="2" stroke-linecap="round" stroke-linejoin="round"><rect width="18" height="18" x="3" y="3" rx="2" ry="2"/><path d="M9 17c2 0 2.8-1 2.8-2.8V10c0-2 1-3.3 3.2-3"/><path d="M9 11.2h5.7"/></svg>
<div style="position:absolute;left:2776.3px;top:643.0px;width:78.69999999999982px;height:54.10000000000002px;background:#fff;border:2px solid #e5e7eb;border-radius:16px;box-sizing:border-box"></div>
<svg style="position:absolute;left:2800.50px;top:655.05px;" width="30" height="30" viewBox="0 0 24 24" fill="none" stroke="#1f2937" stroke-width="2.2" stroke-linecap="round" stroke-linejoin="round"><path d="M12 22v-5"/><path d="M9 8V2"/><path d="M15 8V2"/><path d="M18 8v5a4 4 0 0 1-4 4h-4a4 4 0 0 1-4-4V8Z"/></svg>
<div style="position:absolute;left:2292.5px;top:707px;width:562.8000000000002px;height:66.20000000000005px;background:#fff;border:2px solid #d1d5db;border-radius:14px;box-sizing:border-box"></div>
<div id="t38" class="t" style="left:2311px;top:726.90px;font-size:28px;font-weight:400;color:#2d3748;letter-spacing:0.975px;font-family:'Liberation Sans',sans-serif;">s3 (workspace storage)</div>
<svg style="position:absolute;left:2800.70px;top:724.00px;" width="32" height="32" viewBox="0 0 24 24" fill="none" stroke="#4b5563" stroke-width="2.2" stroke-linecap="round" stroke-linejoin="round"><path d="m6 9 6 6 6-6"/></svg>
<div id="t39" class="t" style="left:2293px;top:827.08px;font-size:24px;font-weight:400;-webkit-text-stroke:0.8px #1f2937;color:#1f2937;letter-spacing:-0.293px;font-family:'Liberation Sans',sans-serif;">Image Fit</div>
<svg style="position:absolute;left:2395.00px;top:825.20px;" width="24" height="24" viewBox="0 0 24 24" fill="none" stroke="#374151" stroke-width="2" stroke-linecap="round" stroke-linejoin="round"><circle cx="12" cy="12" r="10"/><path d="M12 16v-4"/><path d="M12 8h.01"/></svg>
<div style="position:absolute;left:2624.3px;top:806.5px;width:135.29999999999973px;height:55.0px;background:#f3f4f6;border-radius:16px"></div>
<div style="position:absolute;left:2628.3px;top:811.0px;width:59.69999999999982px;height:46.5px;background:#fff;border-radius:14px;box-shadow:0 3px 5px rgba(0,0,0,0.10)"></div>
<svg style="position:absolute;left:2643.20px;top:819.00px;" width="30" height="30" viewBox="0 0 24 24" fill="none" stroke="#3b6fe0" stroke-width="2" stroke-linecap="round" stroke-linejoin="round"><path d="M17 3a2.85 2.83 0 1 1 4 4L7.5 20.5 2 22l1.5-5.5Z"/></svg>
<svg style="position:absolute;left:2711.20px;top:819.00px;" width="30" height="30" viewBox="0 0 24 24" fill="none" stroke="#9ca3af" stroke-width="2" stroke-linecap="round" stroke-linejoin="round"><rect width="18" height="18" x="3" y="3" rx="2" ry="2"/><path d="M9 17c2 0 2.8-1 2.8-2.8V10c0-2 1-3.3 3.2-3"/><path d="M9 11.2h5.7"/></svg>
<div style="position:absolute;left:2776.3px;top:807.0px;width:78.69999999999982px;height:54.0px;background:#fff;border:2px solid #e5e7eb;border-radius:16px;box-sizing:border-box"></div>
<svg style="position:absolute;left:2800.50px;top:819.00px;" width="30" height="30" viewBox="0 0 24 24" fill="none" stroke="#1f2937" stroke-width="2.2" stroke-linecap="round" stroke-linejoin="round"><path d="M12 22v-5"/><path d="M9 8V2"/><path d="M15 8V2"/><path d="M18 8v5a4 4 0 0 1-4 4h-4a4 4 0 0 1-4-4V8Z"/></svg>
<div style="position:absolute;left:2292.5px;top:871px;width:562.8000000000002px;height:66.10000000000002px;background:#fff;border:2px solid #d1d5db;border-radius:14px;box-sizing:border-box"></div>
<div id="t40" class="t" style="left:2311px;top:890.90px;font-size:28px;font-weight:400;color:#2d3748;letter-spacing:0.917px;font-family:'Liberation Sans',sans-serif;">contain</div>
<svg style="position:absolute;left:2800.70px;top:888.00px;" width="32" height="32" viewBox="0 0 24 24" fill="none" stroke="#4b5563" stroke-width="2.2" stroke-linecap="round" stroke-linejoin="round"><path d="m6 9 6 6 6-6"/></svg>
<div id="t41" class="t" style="left:2293px;top:991.08px;font-size:24px;font-weight:400;-webkit-text-stroke:0.8px #1f2937;color:#1f2937;letter-spacing:0.391px;font-family:'Liberation Sans',sans-serif;">Alt Text</div>
<svg style="position:absolute;left:2379.20px;top:989.50px;" width="24" height="24" viewBox="0 0 24 24" fill="none" stroke="#374151" stroke-width="2" stroke-linecap="round" stroke-linejoin="round"><circle cx="12" cy="12" r="10"/><path d="M12 16v-4"/><path d="M12 8h.01"/></svg>
<div style="position:absolute;left:2624.3px;top:970.4px;width:135.29999999999973px;height:55.60000000000002px;background:#f3f4f6;border-radius:16px"></div>
<div style="position:absolute;left:2628.3px;top:974.9px;width:59.69999999999982px;height:47.10000000000002px;background:#fff;border-radius:14px;box-shadow:0 3px 5px rgba(0,0,0,0.10)"></div>
<svg style="position:absolute;left:2643.20px;top:983.20px;" width="30" height="30" viewBox="0 0 24 24" fill="none" stroke="#3b6fe0" stroke-width="2" stroke-linecap="round" stroke-linejoin="round"><path d="M17 3a2.85 2.83 0 1 1 4 4L7.5 20.5 2 22l1.5-5.5Z"/></svg>
<svg style="position:absolute;left:2711.20px;top:983.20px;" width="30" height="30" viewBox="0 0 24 24" fill="none" stroke="#9ca3af" stroke-width="2" stroke-linecap="round" stroke-linejoin="round"><rect width="18" height="18" x="3" y="3" rx="2" ry="2"/><path d="M9 17c2 0 2.8-1 2.8-2.8V10c0-2 1-3.3 3.2-3"/><path d="M9 11.2h5.7"/></svg>
<div style="position:absolute;left:2776.3px;top:970.9px;width:78.69999999999982px;height:54.60000000000002px;background:#fff;border:2px solid #e5e7eb;border-radius:16px;box-sizing:border-box"></div>
<svg style="position:absolute;left:2800.50px;top:983.20px;" width="30" height="30" viewBox="0 0 24 24" fill="none" stroke="#1f2937" stroke-width="2.2" stroke-linecap="round" stroke-linejoin="round"><path d="M12 22v-5"/><path d="M9 8V2"/><path d="M15 8V2"/><path d="M18 8v5a4 4 0 0 1-4 4h-4a4 4 0 0 1-4-4V8Z"/></svg>
<div style="position:absolute;left:2292.5px;top:1035px;width:562.8000000000002px;height:66px;background:#fbfcfc;border:2px solid #d1d5db;border-radius:14px;box-sizing:border-box"></div>
<svg style="position:absolute;left:2836px;top:1082px" width="16" height="16" viewBox="0 0 16 16" stroke="#8a8f98" stroke-width="1.5"><path d="M3 15 L15 3"/><path d="M9 15 L15 9"/></svg>
<div id="t42" class="t" style="left:2311px;top:1054.40px;font-size:28px;font-weight:400;color:#6b7280;letter-spacing:0.723px;font-family:'Liberation Sans',sans-serif;">Static value</div>
<div style="position:absolute;left:2268px;top:1125.7px;width:612px;height:2.0px;background:#e5e7eb"></div>
<div style="position:absolute;left:2268px;top:1282px;width:612px;height:2px;background:#e5e7eb"></div>
<div id="t43" class="t" style="left:2293px;top:1326.88px;font-size:24px;font-weight:400;-webkit-text-stroke:0.8px #1f2937;color:#1f2937;letter-spacing:1.277px;font-family:'Liberation Sans',sans-serif;">Styling</div>
<div style="position:absolute;left:2691.7px;top:1308.7px;width:163.5px;height:58.399999999999864px;background:#fff;border:2px solid #e5e7eb;border-radius:14px;box-sizing:border-box"></div>
<svg style="position:absolute;left:2719.50px;top:1324.00px;" width="28" height="28" viewBox="0 0 24 24" fill="none" stroke="#1f2937" stroke-width="2" stroke-linecap="round" stroke-linejoin="round"><path d="m15 18-6-6 6-6"/></svg>
<div id="t44" class="t" style="left:2766px;top:1326.04px;font-size:25px;font-weight:400;-webkit-text-stroke:0.8px #1f2937;color:#1f2937;letter-spacing:0.251px;font-family:'Liberation Sans',sans-serif;">Show</div>
<div id="t45" class="t" style="left:2293px;top:1388.88px;font-size:24px;font-weight:400;color:#2d3748;letter-spacing:-0.274px;font-family:'Liberation Sans',sans-serif;">Full height</div>
<div style="position:absolute;left:2417px;top:1385px;width:55.69999999999982px;height:31.799999999999955px;background:#d1d5db;border-radius:16px"></div>
<div style="position:absolute;left:2421px;top:1388.9px;width:24px;height:24.0px;background:#fff;border-radius:50%"></div>
<div id="t46" class="t" style="left:2490px;top:1389.68px;font-size:24px;font-weight:400;-webkit-text-stroke:0.8px #2d3748;color:#2d3748;letter-spacing:0.874px;font-family:'Liberation Sans',sans-serif;">Desktop</div>
<div style="position:absolute;left:2600px;top:1385px;width:55.80000000000018px;height:31.799999999999955px;background:#d1d5db;border-radius:16px"></div>
<div style="position:absolute;left:2604px;top:1388.9px;width:24px;height:24.0px;background:#fff;border-radius:50%"></div>
<div id="t47" class="t" style="left:2673px;top:1389.68px;font-size:24px;font-weight:400;-webkit-text-stroke:0.8px #2d3748;color:#2d3748;letter-spacing:1.139px;font-family:'Liberation Sans',sans-serif;">Mobile</div>
<div style="position:absolute;left:2268px;top:1441.7px;width:612px;height:2.0px;background:#e5e7eb"></div>
<div id="t48" class="t" style="left:2293px;top:1486.58px;font-size:24px;font-weight:400;-webkit-text-stroke:0.8px #1f2937;color:#1f2937;letter-spacing:1.201px;font-family:'Liberation Sans',sans-serif;">Copy/Move</div>
<div style="position:absolute;left:2652.5px;top:1468.8px;width:202.5px;height:58.40000000000009px;background:#fff;border:2px solid #e58080;border-radius:14px;box-sizing:border-box"></div>
<div id="t49" class="t" style="left:2679.4px;top:1484.44px;font-size:25px;font-weight:400;-webkit-text-stroke:0.8px #d02c2c;color:#d02c2c;letter-spacing:0.067px;font-family:'Liberation Sans',sans-serif;">Delete</div>
<svg style="position:absolute;left:2772.50px;top:1489.00px" width="16.4" height="16.4" viewBox="3 3 18 18" fill="none" stroke="#e08c8c" stroke-width="2.4" stroke-linecap="round" stroke-linejoin="round"><path d="M15 6v12a3 3 0 1 0 3-3H6a3 3 0 1 0 3 3V6a3 3 0 1 0-3 3h12a3 3 0 1 0-3-3"/></svg>
<div id="t50" class="t" style="left:2792px;top:1484.94px;font-size:25px;font-weight:400;color:#e59393;letter-spacing:-0.257px;font-family:'Liberation Sans',sans-serif;">Del</div>
<div id="t51" class="t" style="left:2293px;top:1558.48px;font-size:24px;font-weight:400;color:#4a5568;letter-spacing:0.575px;font-family:'Liberation Sans',sans-serif;">Copy:</div>
<div id="t52" class="t" style="left:2293px;top:1619.18px;font-size:24px;font-weight:400;color:#4a5568;letter-spacing:0.658px;font-family:'Liberation Sans',sans-serif;">Move:</div>
<div id="t53" class="t" style="left:2293px;top:1679.28px;font-size:24px;font-weight:400;color:#4a5568;letter-spacing:0.500px;font-family:'Liberation Sans',sans-serif;">Navigate:</div>
<div id="t54" class="t" style="left:2293px;top:1738.78px;font-size:24px;font-weight:400;color:#4a5568;letter-spacing:0.746px;font-family:'Liberation Sans',sans-serif;">Add to selection:</div>
<div style="position:absolute;left:2550.8px;top:1544.6px;width:67.19999999999982px;height:50.200000000000045px;background:#fff;border:2px solid #e5e7eb;border-radius:12px;box-sizing:border-box"></div>
<svg style="position:absolute;left:2567.20px;top:1561.00px" width="16.4" height="16.4" viewBox="3 3 18 18" fill="none" stroke="#4a5568" stroke-width="2.4" stroke-linecap="round" stroke-linejoin="round"><path d="M15 6v12a3 3 0 1 0 3-3H6a3 3 0 1 0 3 3V6a3 3 0 1 0-3 3h12a3 3 0 1 0-3-3"/></svg>
<div id="t55" class="t" style="left:2589px;top:1558.48px;font-size:24px;font-weight:400;color:#4a5568;letter-spacing:0.000px;font-family:'Liberation Sans',sans-serif;">C</div>
<svg style="position:absolute;left:2627.70px;top:1559.00px;" width="22" height="22" viewBox="0 0 24 24" fill="none" stroke="#4a5568" stroke-width="2" stroke-linecap="round" stroke-linejoin="round"><path d="M5 12h14"/><path d="m12 5 7 7-7 7"/></svg>
<div style="position:absolute;left:2659px;top:1544.6px;width:66.80000000000018px;height:50.200000000000045px;background:#fff;border:2px solid #e5e7eb;border-radius:12px;box-sizing:border-box"></div>
<svg style="position:absolute;left:2675.90px;top:1561.00px" width="16.4" height="16.4" viewBox="3 3 18 18" fill="none" stroke="#4a5568" stroke-width="2.4" stroke-linecap="round" stroke-linejoin="round"><path d="M15 6v12a3 3 0 1 0 3-3H6a3 3 0 1 0 3 3V6a3 3 0 1 0-3 3h12a3 3 0 1 0-3-3"/></svg>
<div id="t56" class="t" style="left:2696.5px;top:1558.48px;font-size:24px;font-weight:400;color:#4a5568;letter-spacing:0.000px;font-family:'Liberation Sans',sans-serif;">V</div>
<div style="position:absolute;left:2550.8px;top:1604.8px;width:66.19999999999982px;height:50.200000000000045px;background:#fff;border:2px solid #e5e7eb;border-radius:12px;box-sizing:border-box"></div>
<svg style="position:absolute;left:2567.20px;top:1621.70px" width="16.4" height="16.4" viewBox="3 3 18 18" fill="none" stroke="#4a5568" stroke-width="2.4" stroke-linecap="round" stroke-linejoin="round"><path d="M15 6v12a3 3 0 1 0 3-3H6a3 3 0 1 0 3 3V6a3 3 0 1 0-3 3h12a3 3 0 1 0-3-3"/></svg>
<div id="t57" class="t" style="left:2589px;top:1619.18px;font-size:24px;font-weight:400;color:#4a5568;letter-spacing:0.000px;font-family:'Liberation Sans',sans-serif;">X</div>
<svg style="position:absolute;left:2626.50px;top:1619.00px;" width="22" height="22" viewBox="0 0 24 24" fill="none" stroke="#4a5568" stroke-width="2" stroke-linecap="round" stroke-linejoin="round"><path d="M5 12h14"/><path d="m12 5 7 7-7 7"/></svg>
<div style="position:absolute;left:2658px;top:1604.8px;width:67px;height:50.200000000000045px;background:#fff;border:2px solid #e5e7eb;border-radius:12px;box-sizing:border-box"></div>
<svg style="position:absolute;left:2675.00px;top:1621.70px" width="16.4" height="16.4" viewBox="3 3 18 18" fill="none" stroke="#4a5568" stroke-width="2.4" stroke-linecap="round" stroke-linejoin="round"><path d="M15 6v12a3 3 0 1 0 3-3H6a3 3 0 1 0 3 3V6a3 3 0 1 0-3 3h12a3 3 0 1 0-3-3"/></svg>
<div id="t58" class="t" style="left:2695.5px;top:1619.18px;font-size:24px;font-weight:400;color:#4a5568;letter-spacing:0.000px;font-family:'Liberation Sans',sans-serif;">V</div>
<div style="position:absolute;left:2550.8px;top:1665px;width:49.19999999999982px;height:50px;background:#fff;border:2px solid #e5e7eb;border-radius:12px;box-sizing:border-box"></div>
<svg style="position:absolute;left:2564.40px;top:1679.00px;" width="22" height="22" viewBox="0 0 24 24" fill="none" stroke="#4a5568" stroke-width="2" stroke-linecap="round" stroke-linejoin="round"><path d="m12 19-7-7 7-7"/><path d="M19 12H5"/></svg>
<div style="position:absolute;left:2609.7px;top:1665px;width:46.100000000000364px;height:50px;background:#fff;border:2px solid #e5e7eb;border-radius:12px;box-sizing:border-box"></div>
<svg style="position:absolute;left:2621.70px;top:1679.00px;" width="22" height="22" viewBox="0 0 24 24" fill="none" stroke="#4a5568" stroke-width="2" stroke-linecap="round" stroke-linejoin="round"><path d="m5 12 7-7 7 7"/><path d="M12 19V5"/></svg>
<div style="position:absolute;left:2666px;top:1665px;width:48px;height:50px;background:#fff;border:2px solid #e5e7eb;border-radius:12px;box-sizing:border-box"></div>
<svg style="position:absolute;left:2679.00px;top:1679.00px;" width="22" height="22" viewBox="0 0 24 24" fill="none" stroke="#4a5568" stroke-width="2" stroke-linecap="round" stroke-linejoin="round"><path d="M5 12h14"/><path d="m12 5 7 7-7 7"/></svg>
<div style="position:absolute;left:2723.7px;top:1665px;width:74.30000000000018px;height:50px;background:#fff;border:2px solid #e5e7eb;border-radius:12px;box-sizing:border-box"></div>
<div id="t59" class="t" style="left:2738.6px;top:1679.28px;font-size:24px;font-weight:400;color:#4a5568;letter-spacing:-1.981px;font-family:'Liberation Sans',sans-serif;">ESC</div>
<div style="position:absolute;left:2550.8px;top:1726.8px;width:54.19999999999982px;height:46.100000000000136px;background:#fff;border:2px solid #e5e7eb;border-radius:12px;box-sizing:border-box"></div>
<svg style="position:absolute;left:2566px;top:1738px" width="24" height="24" viewBox="0 0 24 24" fill="none" stroke="#4a5568" stroke-width="2" stroke-linejoin="round"><path d="M12 3 L21 12 H16 V20 H8 V12 H3 Z"/></svg>
<div id="t60" class="t" style="left:2615px;top:1740.90px;font-size:28px;font-weight:400;color:#4a5568;letter-spacing:0.000px;font-family:'Liberation Sans',sans-serif;">+</div>
<div style="position:absolute;left:2643.8px;top:1724.7px;width:82.0px;height:50.0px;background:#fff;border:2px solid #e5e7eb;border-radius:12px;box-sizing:border-box"></div>
<div id="t61" class="t" style="left:2657.6px;top:1738.78px;font-size:24px;font-weight:400;color:#4a5568;letter-spacing:0.650px;font-family:'Liberation Sans',sans-serif;">Click</div>
</div><script>(function(){var w=window.innerWidth;if(w&&Math.abs(w-2880)>2){document.getElementById("root").style.zoom=w/2880;}})();</script></body></html>
